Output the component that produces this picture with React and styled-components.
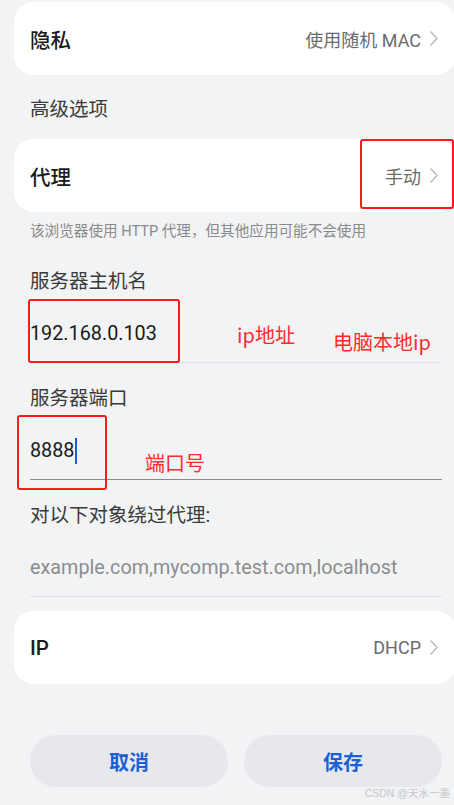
import React from "react";
import styled, { createGlobalStyle } from "styled-components";

const GlobalStyle = createGlobalStyle`
  html, body {
    margin: 0;
    padding: 0;
    background: #f1f3f5;
  }
  body {
    font-family: Roboto, "Noto Sans CJK SC", sans-serif;
    -webkit-font-smoothing: antialiased;
  }
`;

const Page = styled.div`
  position: relative;
  width: 454px;
  height: 805px;
  overflow: hidden;
  background: #f1f3f5;
  display: flex;
  flex-direction: column;
`;

const Card = styled.div`
  position: relative;
  margin: ${(p) => p.$top || 0}px 0 0 14px;
  width: 442px;
  height: 73px;
  flex-shrink: 0;
  box-sizing: border-box;
  background: #ffffff;
  border-radius: 20px;
  display: flex;
  align-items: center;
  justify-content: space-between;
  padding: 0 18px 0 16px;
`;

const CardTitle = styled.span`
  font-size: 20.5px;
  font-weight: 500;
  color: #1a1a1a;
`;

const CardValue = styled.span`
  display: flex;
  align-items: center;
  gap: 9px;
  font-size: 18px;
  color: #6b6b6b;
`;

const SectionLabel = styled.div`
  height: 64px;
  display: flex;
  align-items: center;
  padding-left: 30px;
  font-size: 19.5px;
  color: #3a3a3a;
`;

const Note = styled.div`
  height: 34px;
  box-sizing: border-box;
  padding: 10px 0 0 30px;
  line-height: 18px;
  font-size: 14.6px;
  color: #8a8a8a;
`;

const Field = styled.div`
  position: relative;
  margin: 0 12px 0 30px;
  padding-top: 24px;
`;

const FieldLabel = styled.div`
  height: 24px;
  line-height: 24px;
  font-size: 19.5px;
  color: #3a3a3a;
`;

const Input = styled.div`
  height: 57px;
  padding-top: 11px;
  border-bottom: 1px solid ${(p) => (p.$focused ? "#8a8a8a" : "#dfe1e4")};
  display: flex;
  align-items: center;
  font-size: ${(p) => (p.$placeholder ? 19.8 : 19.8)}px;
  color: ${(p) => (p.$placeholder ? "#8d8d8d" : "#1a1a1a")};
`;

const Caret = styled.span`
  display: inline-block;
  width: 2px;
  height: 26px;
  margin-left: 1px;
  background: #1a5fd8;
`;

const RedBox = styled.div`
  position: absolute;
  left: ${(p) => p.$left}px;
  top: ${(p) => p.$top}px;
  width: ${(p) => p.$w}px;
  height: ${(p) => p.$h}px;
  box-sizing: border-box;
  border: 2px solid #ff1a1a;
  border-radius: 3px;
  pointer-events: none;
`;

const RedNote = styled.span`
  position: absolute;
  left: ${(p) => p.$left}px;
  top: ${(p) => p.$top}px;
  line-height: 24px;
  font-family: "Noto Sans CJK SC", sans-serif;
  font-size: 20px;
  color: #ff2a2a;
  white-space: nowrap;
`;

const Buttons = styled.div`
  margin: 51px 12px 0 30px;
  display: grid;
  grid-template-columns: 1fr 1fr;
  gap: 16px;
`;

const Button = styled.button`
  height: 52px;
  border: none;
  border-radius: 26px;
  background: #e6e8eb;
  color: #1a5fd8;
  font-family: "Noto Sans CJK SC", sans-serif;
  font-size: 20px;
  font-weight: 700;
`;

const Watermark = styled.span`
  position: absolute;
  right: 4px;
  bottom: 5px;
  font-family: "Liberation Sans", "Noto Sans CJK SC", sans-serif;
  font-size: 10.5px;
  color: #c4c6c9;
`;

const Chevron = () => (
  <svg width="8" height="15" viewBox="0 0 8 15">
    <polyline
      points="1,1 7,7.5 1,14"
      fill="none"
      stroke="#b8b8b8"
      strokeWidth="1.4"
      strokeLinecap="round"
      strokeLinejoin="round"
    />
  </svg>
);

const SettingRow = ({ title, value, top, children }) => (
  <Card $top={top}>
    <CardTitle>{title}</CardTitle>
    <CardValue>
      {value}
      <Chevron />
    </CardValue>
    {children}
  </Card>
);

export default function App() {
  return (
    <Page>
      <GlobalStyle />
      <SettingRow title="隐私" value="使用随机 MAC" top={2} />
      <SectionLabel>高级选项</SectionLabel>
      <SettingRow title="代理" value="手动">
        <RedBox $left={346} $top={0} $w={94} $h={70} />
      </SettingRow>
      <Note>该浏览器使用 HTTP 代理，但其他应用可能不会使用</Note>

      <Field>
        <FieldLabel>服务器主机名</FieldLabel>
        <Input>192.168.0.103</Input>
        <RedBox $left={-2} $top={53} $w={152} $h={64} />
        <RedNote $left={207} $top={77}>ip地址</RedNote>
        <RedNote $left={303} $top={84}>电脑本地ip</RedNote>
      </Field>

      <Field>
        <FieldLabel>服务器端口</FieldLabel>
        <Input $focused>
          8888
          <Caret />
        </Input>
        <RedBox $left={-13} $top={52} $w={90} $h={75} />
        <RedNote $left={115} $top={88}>端口号</RedNote>
      </Field>

      <Field>
        <FieldLabel>对以下对象绕过代理:</FieldLabel>
        <Input $placeholder>example.com,mycomp.test.com,localhost</Input>
      </Field>

      <SettingRow title="IP" value="DHCP" top={14} />

      <Buttons>
        <Button>取消</Button>
        <Button>保存</Button>
      </Buttons>
      <Watermark>CSDN @天水一墨</Watermark>
    </Page>
  );
}
